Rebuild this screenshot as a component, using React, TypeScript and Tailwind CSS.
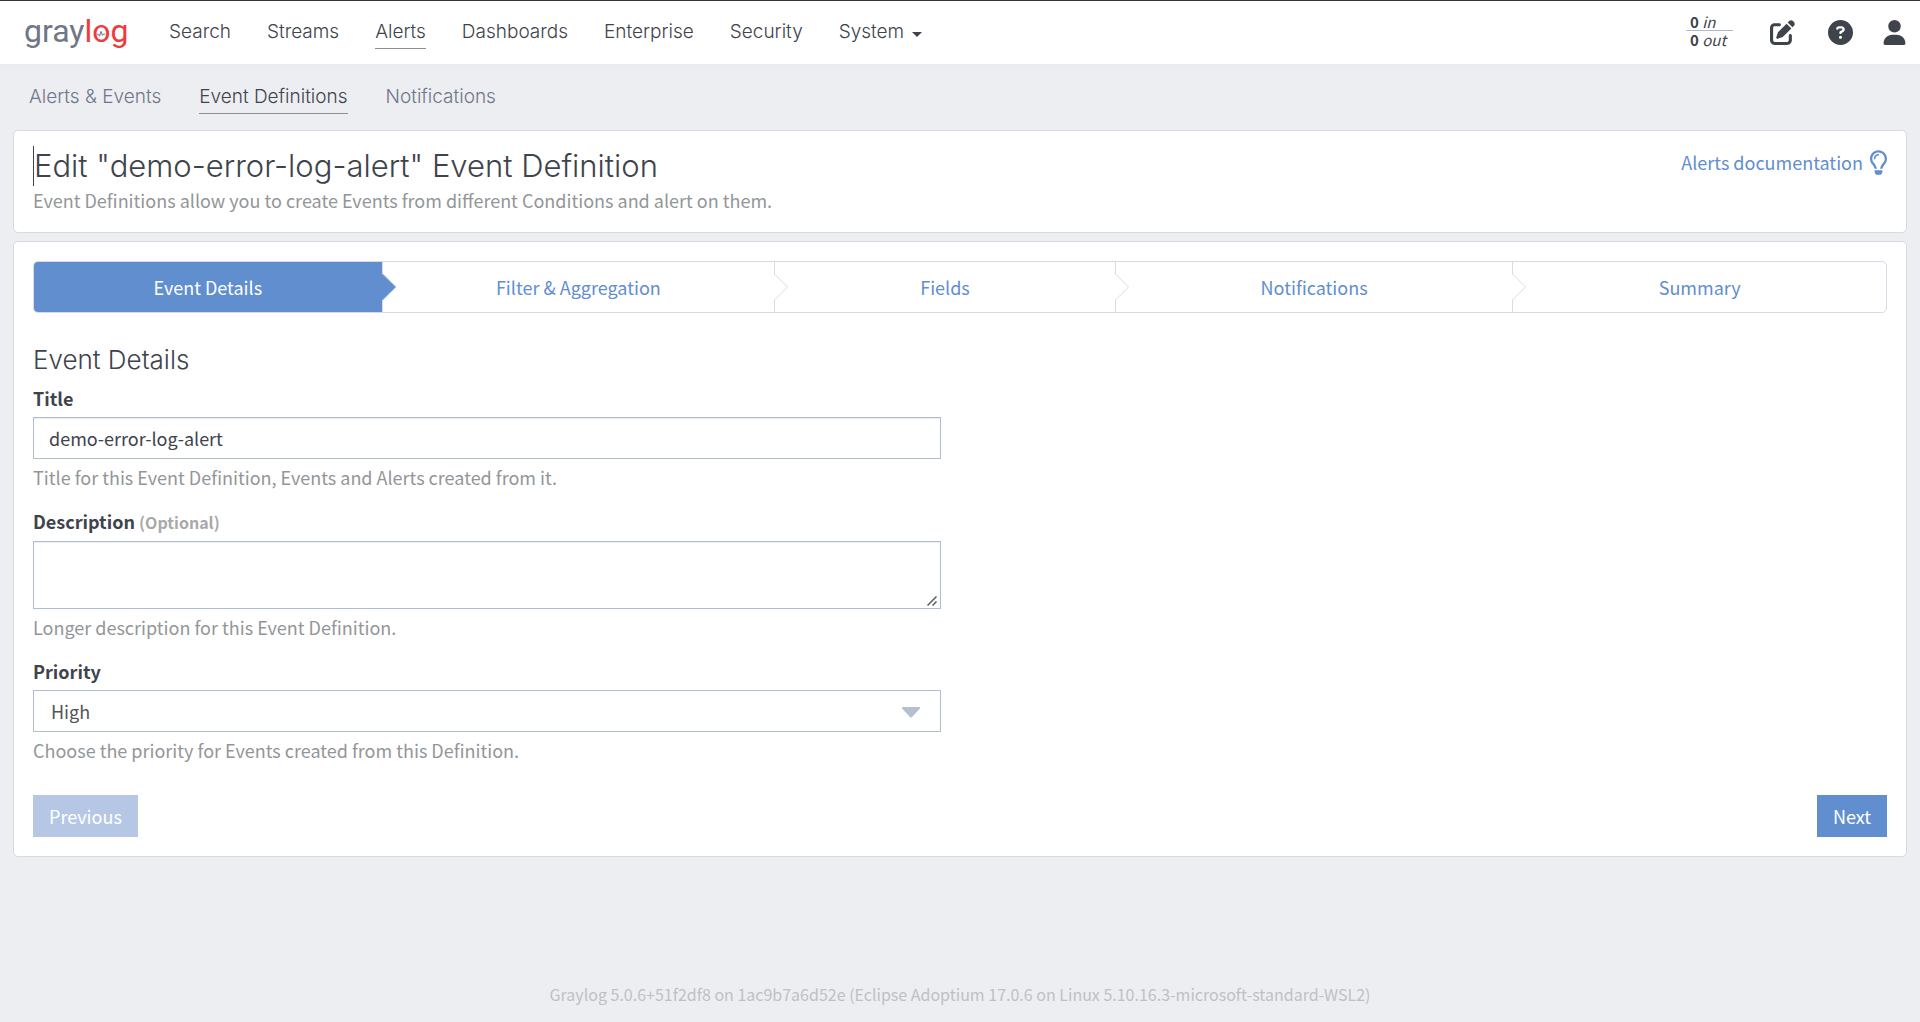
import { useState } from "react";
import { FaRegLightbulb } from "react-icons/fa";
import { FaCircleQuestion, FaPenToSquare, FaUser } from "react-icons/fa6";

const navItems = ["Search", "Streams", "Alerts", "Dashboards", "Enterprise", "Security"];
const subNavItems = ["Alerts & Events", "Event Definitions", "Notifications"];
const steps = ["Event Details", "Filter & Aggregation", "Fields", "Notifications", "Summary"];

const Logo = () => (
	<a
		href="#"
		aria-label="graylog"
		className="block w-[101px] pb-1 font-['Roboto',sans-serif] text-[32px] leading-8 whitespace-nowrap text-[#6e7687]">
		gray
		<span className="text-[#ee3b3c]">
			l
			<span className="relative inline-block">
				o
				<svg viewBox="0 0 14 14" className="absolute left-[2px] top-3 h-[14px] w-[14px]">
					<path
						d="M3 7.200h1.500l1 2 1.500-4.800 1.400 4 .8-1.200h1.800"
						fill="none"
						stroke="#6e7687"
						strokeWidth="1"
					/>
				</svg>
			</span>
			g
		</span>
	</a>
);

const Navbar = () => (
	<header className="relative flex h-16 items-center justify-between border-t border-[#35343a] bg-white pl-6 pr-[13px] shadow-[0_3px_6px_rgba(0,0,0,0.02)]">
		<div className="flex items-center gap-11">
			<Logo />
			<nav className="flex gap-9 font-['Inter',sans-serif] text-[19px] leading-8 font-light">
				{navItems.map((item) => (
					<a
						key={item}
						href="#"
						className={`border-b ${item === "Alerts" ? "border-[#8c8f96]" : "border-transparent"}`}>
						{item}
					</a>
				))}
				<button type="button" className="flex items-center gap-2 border-b border-transparent">
					System
					<svg viewBox="0 0 10 5" className="mt-1 h-[5px] w-[10px]">
						<path d="M0 0h10L5 5z" fill="#3e434c" />
					</svg>
				</button>
			</nav>
		</div>
		<div className="flex items-center">
			<div className="mr-[37px] w-[47px] pb-1 text-[15px] leading-[17px] italic">
				<div className="border-b border-[#b0b8cc] pl-1">
					<b className="not-italic">0</b> in
				</div>
				<div className="pl-1">
					<b className="not-italic">0</b> out
				</div>
			</div>
			<button type="button" aria-label="Scratchpad" className="mr-[33px]">
				<FaPenToSquare size={25} />
			</button>
			<button type="button" aria-label="Help" className="mr-[29px]">
				<FaCircleQuestion size={25} />
			</button>
			<button type="button" aria-label="User menu">
				<FaUser size={25} />
			</button>
		</div>
	</header>
);

const SubNav = () => (
	<nav className="flex gap-[38px] px-[29px] pt-4 pb-4 font-['Inter',sans-serif] text-[19px] leading-[33px] font-light">
		{subNavItems.map((item) => (
			<a
				key={item}
				href="#"
				className={`border-b ${
					item === "Event Definitions" ? "border-[#8c8f96]" : "border-transparent text-[#6e7687]"
				}`}>
				{item}
			</a>
		))}
	</nav>
);

const StepNav = ({ current, onSelect }: { current: number; onSelect: (index: number) => void }) => (
	<div className="grid grid-cols-[349fr_393fr_341fr_398fr_373fr] rounded-[5px] border border-[#d8dbe6]">
		{steps.map((step, index) => (
			<button
				key={step}
				type="button"
				onClick={() => onSelect(index)}
				className={`relative h-[50px] first:rounded-l-[4px] ${
					current === index ? "bg-[#618ecf] text-white" : "text-[#618ecf]"
				} ${index < steps.length - 1 ? "border-r border-[#d8dbe6]" : ""}`}>
				{step}
				{index < steps.length - 1 && (
					<svg viewBox="0 0 15 28" className="absolute -right-[15px] top-[11px] z-10 h-7 w-[15px]">
						<path d="M0 1L13.500 14L0 27" fill={current === index ? "#618ecf" : "#fff"} />
						<path
							d="M0.500 1L13.500 14L0.500 27"
							fill="none"
							stroke={current === index ? "#618ecf" : "#d8dbe6"}
						/>
					</svg>
				)}
			</button>
		))}
	</div>
);

const Help = ({ children }: { children: string }) => (
	<p className="mt-[5px] mb-[18px] leading-[26px] text-[#939699]">{children}</p>
);

const App = () => {
	const [current, setCurrent] = useState(0);
	const [title, setTitle] = useState("demo-error-log-alert");
	const [description, setDescription] = useState("");
	const [priority, setPriority] = useState("High");

	return (
		<div className="flex min-h-screen flex-col bg-[#edeef2] font-['Noto_Sans_CJK_SC',sans-serif] text-[18px] leading-[26px] text-[#3e434c]">
			<Navbar />
			<SubNav />
			<main className="flex flex-col gap-2 px-[13px]">
				<section className="flex items-start justify-between rounded-[5px] border border-[#d5dae5] bg-white px-[19px] pt-[15px] pb-[18px]">
					<div>
						<h1 className="border-l border-[#3e434c] font-['Inter',sans-serif] text-[31px] leading-10 font-light">
							Edit "demo-error-log-alert" Event Definition
						</h1>
						<p className="leading-7 text-[#939699]">
							Event Definitions allow you to create Events from different Conditions and alert on them.
						</p>
					</div>
					<a href="#" className="mt-[3px] flex items-center gap-[7px] text-[#618ecf]">
						Alerts documentation
						<FaRegLightbulb size={25} className="w-[17px]" />
					</a>
				</section>

				<section className="rounded-[5px] border border-[#d5dae5] bg-white p-[19px]">
					<StepNav current={current} onSelect={setCurrent} />
					<form onSubmit={(e) => e.preventDefault()}>
						<div className="w-1/2 pr-[19px]">
							<h2 className="mt-[31px] mb-[9px] font-['Inter',sans-serif] text-[26px] leading-8 font-light">
								Event Details
							</h2>
							<label htmlFor="title" className="mb-[6px] block font-bold">
								Title
							</label>
							<input
								id="title"
								type="text"
								value={title}
								onChange={(e) => setTitle(e.target.value)}
								className="block h-[42px] w-full border border-[#b0bccf] px-[15px] shadow-[inset_0_1px_1px_rgba(0,0,0,0.075)]"
							/>
							<Help>Title for this Event Definition, Events and Alerts created from it.</Help>
							<label htmlFor="description" className="mb-[6px] block font-bold">
								Description <small className="text-[16px] text-[#a9a9a9]">(Optional)</small>
							</label>
							<div className="relative">
								<textarea
									id="description"
									value={description}
									onChange={(e) => setDescription(e.target.value)}
									className="block h-[68px] w-full border border-[#b0bccf] px-[15px] py-2 shadow-[inset_0_1px_1px_rgba(0,0,0,0.075)] [&::-webkit-resizer]:hidden"
								/>
								<svg
									viewBox="0 0 10 10"
									className="pointer-events-none absolute right-1 bottom-[3px] h-[10px] w-[10px]">
									<path d="M0.500 9.500l9-9M5.500 9.500l4-4" stroke="#5b5b5b" strokeWidth="1.500" />
								</svg>
							</div>
							<Help>Longer description for this Event Definition.</Help>
							<label htmlFor="priority" className="mb-[6px] block font-bold">
								Priority
							</label>
							<div className="relative">
								<select
									id="priority"
									value={priority}
									onChange={(e) => setPriority(e.target.value)}
									className="block h-[42px] w-full appearance-none border border-[#b0bccf] px-[17px] text-[#555]">
									<option>High</option>
									<option>Normal</option>
									<option>Low</option>
								</select>
								<svg
									viewBox="0 0 20 12"
									className="pointer-events-none absolute right-5 top-4 h-3 w-5">
									<path
										d="M2 1h16a1 1 0 0 1 .7 1.800L11 11a1.400 1.400 0 0 1-2 0L1.300 2.800A1 1 0 0 1 2 1z"
										fill="#b5bfd2"
									/>
								</svg>
							</div>
							<Help>Choose the priority for Events created from this Definition.</Help>
						</div>
						<div className="mt-8 flex justify-between">
							<button
								type="button"
								disabled={current === 0}
								onClick={() => setCurrent(current - 1)}
								className="h-[42px] bg-[#618ecf] px-4 text-white disabled:bg-[#b6c7e6]">
								Previous
							</button>
							<button
								type="button"
								onClick={() => setCurrent(Math.min(current + 1, steps.length - 1))}
								className="h-[42px] bg-[#618ecf] px-4 text-white">
								Next
							</button>
						</div>
					</form>
				</section>
			</main>
			<footer className="mt-auto pb-[15px] text-center text-[16px] text-[#bfc0c4]">
				Graylog 5.0.6+51f2df8 on 1ac9b7a6d52e (Eclipse Adoptium 17.0.6 on Linux
				5.10.16.3-microsoft-standard-WSL2)
			</footer>
		</div>
	);
};

export default App;
